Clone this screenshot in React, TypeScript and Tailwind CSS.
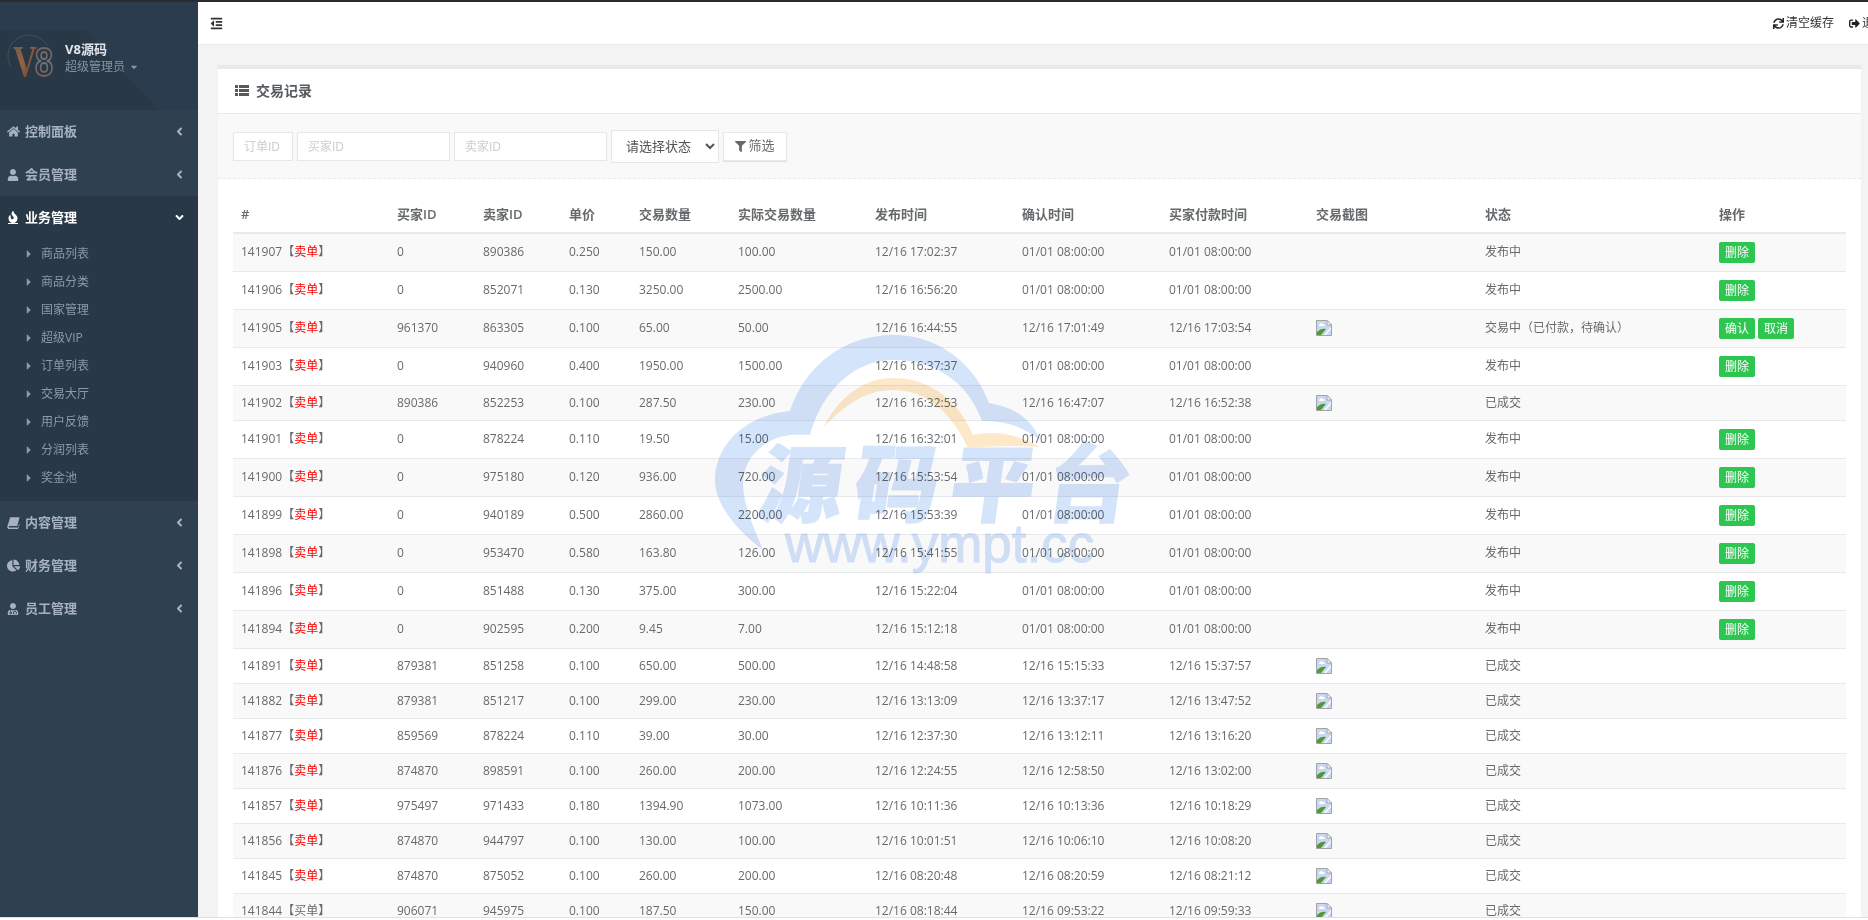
import {
    FaAngleDown,
    FaAngleLeft,
    FaCaretDown,
    FaCaretRight,
    FaChartPie,
    FaFilter,
    FaHome,
    FaOutdent,
    FaSignOutAlt,
    FaSync,
    FaUser,
    FaUserMd,
    FaFire,
} from "react-icons/fa";

const subMenu = ["商品列表", "商品分类", "国家管理", "超级VIP", "订单列表", "交易大厅", "用户反馈", "分润列表", "奖金池"];

const columns = ["买家ID", "卖家ID", "单价", "交易数量", "实际交易数量", "发布时间", "确认时间", "买家付款时间", "交易截图", "状态", "操作"];

const none = "01/01 08:00:00";

type Row = {
    id: string;
    kind?: string;
    buyer: string;
    seller: string;
    price: string;
    qty: string;
    real: string;
    pub: string;
    confirm: string;
    pay: string;
    img?: boolean;
    status: string;
    actions?: string[];
};

const open = (id: string, seller: string, price: string, qty: string, real: string, pub: string): Row => ({
    id,
    buyer: "0",
    seller,
    price,
    qty,
    real,
    pub: "12/16 " + pub,
    confirm: none,
    pay: none,
    status: "发布中",
    actions: ["删除"],
});

const done = (id: string, buyer: string, seller: string, price: string, qty: string, real: string, pub: string, confirm: string, pay: string, kind?: string): Row => ({
    id,
    kind,
    buyer,
    seller,
    price,
    qty,
    real,
    pub: "12/16 " + pub,
    confirm: "12/16 " + confirm,
    pay: "12/16 " + pay,
    img: true,
    status: "已成交",
});

const rows: Row[] = [
    open("141907", "890386", "0.250", "150.00", "100.00", "17:02:37"),
    open("141906", "852071", "0.130", "3250.00", "2500.00", "16:56:20"),
    { ...done("141905", "961370", "863305", "0.100", "65.00", "50.00", "16:44:55", "17:01:49", "17:03:54"), status: "交易中（已付款，待确认）", actions: ["确认", "取消"] },
    open("141903", "940960", "0.400", "1950.00", "1500.00", "16:37:37"),
    done("141902", "890386", "852253", "0.100", "287.50", "230.00", "16:32:53", "16:47:07", "16:52:38"),
    open("141901", "878224", "0.110", "19.50", "15.00", "16:32:01"),
    open("141900", "975180", "0.120", "936.00", "720.00", "15:53:54"),
    open("141899", "940189", "0.500", "2860.00", "2200.00", "15:53:39"),
    open("141898", "953470", "0.580", "163.80", "126.00", "15:41:55"),
    open("141896", "851488", "0.130", "375.00", "300.00", "15:22:04"),
    open("141894", "902595", "0.200", "9.45", "7.00", "15:12:18"),
    done("141891", "879381", "851258", "0.100", "650.00", "500.00", "14:48:58", "15:15:33", "15:37:57"),
    done("141882", "879381", "851217", "0.100", "299.00", "230.00", "13:13:09", "13:37:17", "13:47:52"),
    done("141877", "859569", "878224", "0.110", "39.00", "30.00", "12:37:30", "13:12:11", "13:16:20"),
    done("141876", "874870", "898591", "0.100", "260.00", "200.00", "12:24:55", "12:58:50", "13:02:00"),
    done("141857", "975497", "971433", "0.180", "1394.90", "1073.00", "10:11:36", "10:13:36", "10:18:29"),
    done("141856", "874870", "944797", "0.100", "130.00", "100.00", "10:01:51", "10:06:10", "10:08:20"),
    done("141845", "874870", "875052", "0.100", "260.00", "200.00", "08:20:48", "08:20:59", "08:21:12"),
    done("141844", "906071", "945975", "0.100", "187.50", "150.00", "08:18:44", "09:53:22", "09:59:33", "买单"),
];

const BrokenImage = () => (
    <svg width="16" height="16" viewBox="0 0 16 16" className="block">
        <path d="M0.5 0.5H11L15.5 5V15.5H0.5Z" fill="#c9d7f2" stroke="#a3a3a3" />
        <path d="M3 5c1-2 3-2 4-1 2 0 2 2 1 2H3Z" fill="#fff" />
        <path d="M1 15v-3c3-3 6-4 9-3l-5 6Z" fill="#4f9a34" />
        <path d="M10 15l5-6v-2l-7 8Z" fill="#fff" />
        <path d="M11 0.5V5H15.5Z" fill="#fff" stroke="#a3a3a3" />
    </svg>
);

const BookIcon = () => (
    <svg width="13" height="12" viewBox="0 0 13 12" fill="currentColor">
        <path d="M3.2 0.3H12.6L10.2 9H2.4C1.6 9 1.6 10.6 2.4 10.6H11L12.2 6.5L12.6 7.5L11 12H2C0.6 12 0 10.6 0.4 9.3Z" />
    </svg>
);

const ListIcon = () => (
    <svg width="14" height="11" viewBox="0 0 14 11" fill="currentColor">
        <path d="M0 0h3v3H0ZM4 0h10v3H4ZM0 4h3v3H0ZM4 4h10v3H4ZM0 8h3v3H0ZM4 8h10v3H4Z" />
    </svg>
);

const Logo = () => (
    <svg width="50" height="50" viewBox="0 0 50 50" className="shrink-0 mt-[-6px]">
        <defs>
            <linearGradient id="vee" x1="0" y1="0" x2="1" y2="1">
                <stop offset="0" stopColor="#5c5a60" />
                <stop offset="0.45" stopColor="#96623f" />
                <stop offset="1" stopColor="#5a2f35" />
            </linearGradient>
            <linearGradient id="eight" x1="0" y1="0" x2="0" y2="1">
                <stop offset="0" stopColor="#7a5a50" />
                <stop offset="0.5" stopColor="#6d7474" />
                <stop offset="1" stopColor="#8a5048" />
            </linearGradient>
        </defs>
        <circle cx="22" cy="24" r="21" fill="none" stroke="#4c5860" strokeWidth="0.7" strokeDasharray="66 66" transform="rotate(150 22 24)" />
        <text x="6" y="44" textLength="24" lengthAdjust="spacingAndGlyphs" fontFamily="'Liberation Serif', serif" fontWeight="700" fontSize="45" fill="url(#vee)">V</text>
        <text x="28" y="44" textLength="18" lengthAdjust="spacingAndGlyphs" fontFamily="'Liberation Sans', sans-serif" fontWeight="700" fontSize="41" fill="none" stroke="url(#eight)" strokeWidth="2">8</text>
    </svg>
);

const NavItem = ({ icon, label }: { icon: React.ReactNode; label: string }) => (
    <div className="h-[43px] flex items-center text-[#a7b1c2] font-semibold">
        <span className="w-[25px] flex justify-center pl-[1px] text-[13px] shrink-0">{icon}</span>
        <span className="flex-1">{label}</span>
        <FaAngleLeft className="mr-[12px] text-[13px]" />
    </div>
);

const Sidebar = () => (
    <aside className="w-[198px] shrink-0 bg-[#2f4050] text-[13px] h-[918px]">
        <div className="relative h-[108px] bg-[#293a4a] overflow-hidden flex items-center gap-[7px] pl-[7px] pb-[6px] pt-[14px]">
            <svg className="absolute inset-0 w-full h-full" viewBox="0 0 198 108" preserveAspectRatio="none">
                <path d="M0 0H110L85 28L0 28Z" fill="#2a3d4e" />
                <path d="M85 28L158 108H198V0H110Z" fill="#2a3c4d" />
                <path d="M0 28H85L158 108H0Z" fill="#283847" />
            </svg>
            <div className="relative flex"><Logo /></div>
            <div className="relative flex flex-col gap-[1px] mt-[-6px] ml-[1px]">
                <span className="text-[#dfe4ed] font-bold leading-[18px]">V8源码</span>
                <span className="text-[#8095a8] text-[12px] leading-[16px] flex items-center gap-[4px]">
                    超级管理员 <FaCaretDown className="text-[10px]" />
                </span>
            </div>
        </div>
        <NavItem icon={<FaHome />} label="控制面板" />
        <NavItem icon={<FaUser className="text-[12px]" />} label="会员管理" />
        <div className="bg-[#293846] pb-[10px]">
            <div className="h-[43px] flex items-center text-white font-semibold">
                <span className="w-[25px] flex justify-center pl-[1px] shrink-0 flex-col items-center">
                    <FaFire className="text-[12px]" />
                    <span className="h-[1px] w-[10px] bg-white"></span>
                </span>
                <span className="flex-1">业务管理</span>
                <FaAngleDown className="mr-[12px] text-[13px]" />
            </div>
            {subMenu.map((item) => (
                <div key={item} className="h-[28px] flex items-center text-[12px] text-[#8d99ab] pt-[2px]">
                    <FaCaretRight className="ml-[25px] mr-[8px] text-[12px] w-[8px]" />
                    {item}
                </div>
            ))}
        </div>
        <NavItem icon={<BookIcon />} label="内容管理" />
        <NavItem icon={<FaChartPie />} label="财务管理" />
        <NavItem icon={<FaUserMd className="text-[12px]" />} label="员工管理" />
    </aside>
);

const Watermark = () => (
    <div className="absolute left-[700px] top-[320px] w-[460px] h-[270px] pointer-events-none mix-blend-multiply select-none">
        <svg width="460" height="270" viewBox="0 0 460 270" className="absolute inset-0">
            <path
                d="M63 230C30 205 15 180 15 160C15 125 45 95 90 91C105 45 145 15 193 15C240 15 275 45 289 83C315 87 332 100 340 120C325 108 305 100 282 101C268 62 235 40 193 40C155 40 122 70 110 115C100 114 90 114 80 117C55 125 43 145 43 163C43 185 55 210 63 230Z"
                fill="#d4e4fb"
            />
            <path
                d="M123 108C140 75 165 58 193 58C230 58 258 80 273 115C295 110 320 115 340 127C315 125 290 126 268 128C250 90 225 70 193 70C165 70 145 85 123 108Z"
                fill="#fde9c9"
            />
        </svg>
        <div className="absolute left-[60px] top-[104px] -skew-x-[8deg] font-black text-[#d4e4fb] text-[84px] leading-[110px] tracking-[12px] whitespace-nowrap [-webkit-text-stroke:1.5px_#d4e4fb] font-['Noto_Sans_CJK_SC',sans-serif]">
            源码平台
        </div>
        <div className="absolute left-[85px] top-[194px] text-[#d4e4fb] text-[53px] leading-[60px] whitespace-nowrap [-webkit-text-stroke:1px_#d4e4fb] font-['Liberation_Sans',sans-serif]">
            www.ympt.cc
        </div>
    </div>
);

const Panel = () => (
    <div className="mt-[20px] ml-[20px] mr-[7px] bg-white border-t-4 border-[#e7eaec]">
        <div className="h-[45px] border-b border-[#e7eaec] flex items-center pl-[17px] pb-[2px] gap-[7px] text-[14px] font-semibold text-[#555a5f]">
            <ListIcon />
            交易记录
        </div>
        <div className="h-[65px] bg-[#f9f9f9] border-b border-dashed border-[#e7eaec] flex items-center pl-[15px] text-[12px]">
            <input placeholder="订单ID" className="w-[60px] h-[29px] bg-white border border-[#e5e6e7] pl-[10px] placeholder:text-[#ccc] outline-none" />
            <input placeholder="买家ID" className="ml-[4px] w-[153px] h-[29px] bg-white border border-[#e5e6e7] pl-[10px] placeholder:text-[#ccc] outline-none" />
            <input placeholder="卖家ID" className="ml-[4px] w-[153px] h-[29px] bg-white border border-[#e5e6e7] pl-[10px] placeholder:text-[#ccc] outline-none" />
            <select className="ml-[4px] w-[108px] h-[33px] bg-white border border-[#e5e6e7] pl-[10px] text-[13px] text-[#555] outline-none">
                <option>请选择状态</option>
            </select>
            <button className="ml-[4px] w-[64px] h-[29px] bg-white border border-[#e7eaec] shadow-[0_1px_1px_#e0e3e6] flex items-center justify-center gap-[2px] text-[13px] text-[#676a6c]">
                <FaFilter className="text-[11px]" />
                筛选
            </button>
        </div>
        <div className="px-[15px] pt-[19px]">
            <table className="table-fixed w-[1613px] text-[12px] text-[#676a6c] border-collapse">
                <colgroup>
                    <col className="w-[156px]" />
                    <col className="w-[86px]" />
                    <col className="w-[86px]" />
                    <col className="w-[70px]" />
                    <col className="w-[99px]" />
                    <col className="w-[137px]" />
                    <col className="w-[147px]" />
                    <col className="w-[147px]" />
                    <col className="w-[147px]" />
                    <col className="w-[169px]" />
                    <col className="w-[234px]" />
                    <col className="w-[135px]" />
                </colgroup>
                <thead>
                    <tr className="border-b-2 border-[#e7eaec] text-[13px]">
                        <th className="text-left font-semibold px-[8px] h-[35px]">#</th>
                        {columns.map((c) => (
                            <th key={c} className="text-left font-semibold px-[8px] whitespace-nowrap">
                                {c}
                            </th>
                        ))}
                    </tr>
                </thead>
                <tbody>
                    {rows.map((r) => (
                        <tr key={r.id} className={"border-b border-[#e7eaec] odd:bg-[#f9f9f9] " + (r.actions ? "h-[38px]" : "h-[35px]")}>
                            <td className="px-[8px] whitespace-nowrap">
                                {r.id}【{r.kind ? r.kind : <span className="text-[#f00]">卖单</span>}】
                            </td>
                            <td className="px-[8px]">{r.buyer}</td>
                            <td className="px-[8px]">{r.seller}</td>
                            <td className="px-[8px]">{r.price}</td>
                            <td className="px-[8px]">{r.qty}</td>
                            <td className="px-[8px]">{r.real}</td>
                            <td className="px-[8px] whitespace-nowrap">{r.pub}</td>
                            <td className="px-[8px] whitespace-nowrap">{r.confirm}</td>
                            <td className="px-[8px] whitespace-nowrap">{r.pay}</td>
                            <td className="px-[8px]">{r.img && <BrokenImage />}</td>
                            <td className="px-[8px] whitespace-nowrap">{r.status}</td>
                            <td className="px-[8px]">
                                {r.actions && (
                                    <div className="flex gap-[3px]">
                                        {r.actions.map((a) => (
                                            <button key={a} className="w-[36px] h-[21px] rounded-[2px] bg-[#2cc650] text-white text-[12px] leading-[21px]">
                                                {a}
                                            </button>
                                        ))}
                                    </div>
                                )}
                            </td>
                        </tr>
                    ))}
                </tbody>
            </table>
        </div>
    </div>
);

const App = () => (
    <div className="relative w-[1868px] h-[920px] overflow-hidden bg-white font-['Open_Sans','Noto_Sans_CJK_SC',sans-serif]">
        <div className="h-[2px] bg-[#2b2b2b]"></div>
        <div className="flex h-[916px] overflow-hidden border-b border-[#dfe2e5]">
            <Sidebar />
            <main className="flex-1 min-w-0 bg-[#f3f3f4] overflow-hidden">
                <header className="h-[43px] bg-white border-b border-[#e7eaec] flex items-center justify-between pl-[12px] text-[12px] text-[#333] overflow-hidden">
                    <FaOutdent className="text-[13px]" />
                    <div className="flex items-center shrink-0 mr-[-18px]">
                        <FaSync className="text-[11px] mr-[2px] text-[#222]" />
                        <span>清空缓存</span>
                        <FaSignOutAlt className="text-[11px] ml-[15px] mr-[2px] text-[#222]" />
                        <span>退出</span>
                    </div>
                </header>
                <Panel />
            </main>
        </div>
        <Watermark />
    </div>
);

export default App;
